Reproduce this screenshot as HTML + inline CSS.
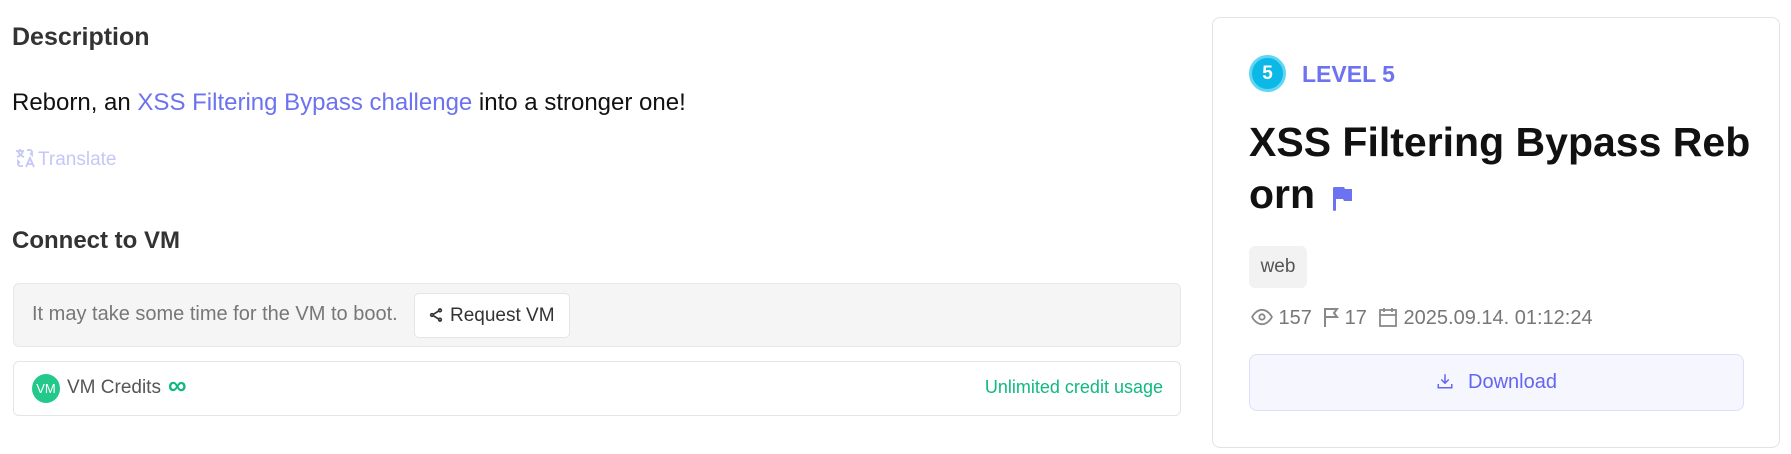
<!DOCTYPE html>
<html><head><meta charset="utf-8"><style>
*{box-sizing:border-box;margin:0;padding:0}
body{width:1791px;height:454px;background:#fff;font-family:"Liberation Sans",sans-serif;position:relative;overflow:hidden;color:#111}
.a{position:absolute;white-space:nowrap}
</style></head><body>
<div class="a" style="left:12px;top:23px;font-size:25px;font-weight:600;color:#333">Description</div>
<div class="a" style="left:12px;top:89px;font-size:24px;color:#111">Reborn, an <span style="color:#6c72f0">XSS Filtering Bypass challenge</span> into a stronger one!</div>
<div class="a" style="left:13px;top:146px;font-size:19px;color:#c5c7f7">
<svg width="24" height="24" viewBox="0 0 24 24" style="vertical-align:-5px;margin-right:1px" fill="none" stroke="#c5c7f7" stroke-width="1.8"><path d="M3 5h8M7 3v2M5 5c1 3 3 5 6 6M10 5c-1 3-3 5-6 6M14 4h3a2 2 0 0 1 2 2v3l-2-2M10 20H7a2 2 0 0 1-2-2v-3l2 2M13 21l4-9 4 9M14.5 18h5"/></svg>Translate</div>
<div class="a" style="left:12px;top:227px;font-size:24px;font-weight:600;color:#333">Connect to VM</div>
<div class="a" style="left:13px;top:283px;width:1168px;height:64px;background:#f5f5f5;border:1px solid #e8e8e8;border-radius:6px"></div>
<div class="a" style="left:32px;top:303px;font-size:20px;color:#777">It may take some time for the VM to boot.</div>
<div class="a" style="left:414px;top:293px;width:156px;height:45px;background:#fff;border:1px solid #e5e5e5;border-radius:5px;font-size:19px;color:#333;padding:11px 0 0 13px">
<svg width="16" height="16" viewBox="0 0 24 24" style="vertical-align:-2px;margin-right:6px" fill="none" stroke="#333" stroke-width="2.5"><circle cx="18" cy="5" r="2"/><circle cx="6" cy="12" r="2"/><circle cx="18" cy="19" r="2"/><path d="M8 11l8-5M8 13l8 5"/></svg>Request VM</div>
<div class="a" style="left:13px;top:361px;width:1168px;height:55px;background:#fff;border:1px solid #e5e5e5;border-radius:6px"></div>
<div class="a" style="left:32px;top:374px;width:28px;height:29px;border-radius:50%;background:#22c98a;color:#fff;font-size:13px;text-align:center;line-height:29px">VM</div>
<div class="a" style="left:67px;top:377px;font-size:19px;color:#555">VM Credits</div>
<div class="a" style="left:168px;top:370px;font-size:26px;color:#10b981;font-weight:bold">∞</div>
<div class="a" style="right:628px;top:377px;font-size:18px;color:#10b981">Unlimited credit usage</div>

<div class="a" style="left:1212px;top:17px;width:568px;height:431px;border:1px solid #e3e3e3;border-radius:8px"></div>
<div class="a" style="left:1249px;top:55px;width:37px;height:37px;border-radius:50%;background:#0bb8e6;border:3px solid #5fd6f5;color:#fff;font-weight:bold;font-size:19px;text-align:center;line-height:31px">5</div>
<div class="a" style="left:1302px;top:61px;font-size:23px;font-weight:600;color:#6c72f0">LEVEL 5</div>
<div class="a" style="left:1249px;top:116px;font-size:41px;font-weight:bold;line-height:52px;color:#111">XSS Filtering Bypass Reb<br>orn</div>
<svg class="a" style="left:1332px;top:185px" width="22" height="26" viewBox="0 0 22 26"><rect x="1" y="2" width="3" height="24" rx="1.5" fill="#6c72f0"/><path d="M3 2h9l1 2h7v12h-8l-1-2H3z" fill="#6c72f0"/></svg>
<div class="a" style="left:1249px;top:246px;width:58px;height:42px;background:#f2f2f3;border-radius:6px;font-size:19px;color:#555;text-align:center;line-height:42px">web</div>
<div class="a" style="left:1251px;top:307px;font-size:20px;color:#777">
<svg width="22" height="18" viewBox="0 0 24 20" style="vertical-align:-2px" fill="none" stroke="#888" stroke-width="2"><path d="M1 10s4-8 11-8 11 8 11 8-4 8-11 8S1 10 1 10z"/><circle cx="12" cy="10" r="3"/></svg> 157&nbsp;
<svg width="16" height="20" viewBox="0 0 16 20" style="vertical-align:-3px" fill="none" stroke="#888" stroke-width="2"><path d="M2 1v19M2 2h12l-3 4 3 4H2"/></svg> 17&nbsp;
<svg width="20" height="20" viewBox="0 0 20 20" style="vertical-align:-3px" fill="none" stroke="#888" stroke-width="1.8"><rect x="2" y="3" width="16" height="16"/><path d="M2 8h16M6 1v4M14 1v4"/></svg> 2025.09.14. 01:12:24</div>
<div class="a" style="left:1249px;top:354px;width:495px;height:57px;background:#f6f7fe;border:1px solid #dcdffb;border-radius:8px;text-align:center;line-height:55px;font-size:20px;color:#6366f1">
<svg width="18" height="18" viewBox="0 0 24 24" style="vertical-align:-2px;margin-right:14px" fill="none" stroke="#6366f1" stroke-width="2"><path d="M12 3v12M7 10l5 5 5-5M3 16v5h18v-5"/></svg>Download</div>
</body></html>
